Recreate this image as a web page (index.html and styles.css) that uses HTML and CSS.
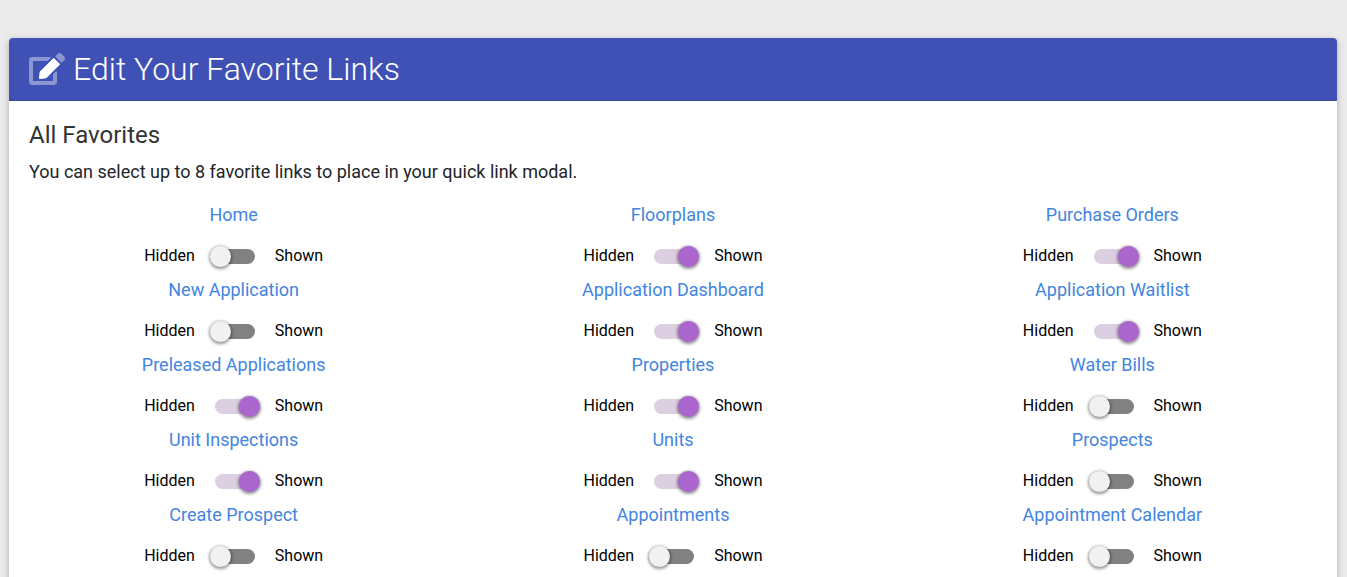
FILE: index.html
```html
<!DOCTYPE html>
<html lang="en">
<head>
    <meta charset="UTF-8">
    <meta name="viewport" content="width=device-width, initial-scale=1.0">
    <title>Edit Your Favorite Links</title>
    <link rel="stylesheet" href="styles.css">
</head>
<body>
    <main class="card">
        <!-- Card title -->
        <div class="card-header">
            <h2>
                <svg class="icon" viewBox="0 0 576 512" aria-hidden="true">
                    <path class="icon-secondary" d="M564.6 60.3l-48.8-48.8c-15.2-15.2-39.9-15.2-55.2 0l-35.4 35.4c-3.8 3.8-3.8 10 0 13.8l90.2 90.2c3.8 3.8 10 3.8 13.8 0l35.4-35.4c15.2-15.3 15.2-40 0-55.2zM384 346.2V448H64V128h229.8c3.2 0 6.2-1.3 8.5-3.5l40-40c7.6-7.6 2.2-20.5-8.5-20.5H48C21.5 64 0 85.5 0 112v352c0 26.5 21.5 48 48 48h352c26.5 0 48-21.5 48-48V306.2c0-10.7-12.9-16-20.5-8.5l-40 40c-2.2 2.3-3.5 5.3-3.5 8.5z"/>
                    <path d="M402.6 83.2l90.2 90.2c3.8 3.8 3.8 10 0 13.8L274.4 405.6l-92.8 10.3c-12.4 1.4-22.9-9.1-21.5-21.5l10.3-92.8L388.8 83.2c3.8-3.8 10-3.8 13.8 0z"/>
                </svg>
                Edit Your Favorite Links
            </h2>
        </div>

        <div class="card-body">
            <h4>All Favorites</h4>
            <p>You can select up to 8 favorite links to place in your quick link modal.</p>

            <!-- One cell per link, three across -->
            <div class="favorites">
                <div class="favorite">
                    <a href="#">Home</a>
                    <label class="switch">Hidden <input type="checkbox"> Shown</label>
                </div>
                <div class="favorite">
                    <a href="#">Floorplans</a>
                    <label class="switch">Hidden <input type="checkbox" checked> Shown</label>
                </div>
                <div class="favorite">
                    <a href="#">Purchase Orders</a>
                    <label class="switch">Hidden <input type="checkbox" checked> Shown</label>
                </div>

                <div class="favorite">
                    <a href="#">New Application</a>
                    <label class="switch">Hidden <input type="checkbox"> Shown</label>
                </div>
                <div class="favorite">
                    <a href="#">Application Dashboard</a>
                    <label class="switch">Hidden <input type="checkbox" checked> Shown</label>
                </div>
                <div class="favorite">
                    <a href="#">Application Waitlist</a>
                    <label class="switch">Hidden <input type="checkbox" checked> Shown</label>
                </div>

                <div class="favorite">
                    <a href="#">Preleased Applications</a>
                    <label class="switch">Hidden <input type="checkbox" checked> Shown</label>
                </div>
                <div class="favorite">
                    <a href="#">Properties</a>
                    <label class="switch">Hidden <input type="checkbox" checked> Shown</label>
                </div>
                <div class="favorite">
                    <a href="#">Water Bills</a>
                    <label class="switch">Hidden <input type="checkbox"> Shown</label>
                </div>

                <div class="favorite">
                    <a href="#">Unit Inspections</a>
                    <label class="switch">Hidden <input type="checkbox" checked> Shown</label>
                </div>
                <div class="favorite">
                    <a href="#">Units</a>
                    <label class="switch">Hidden <input type="checkbox" checked> Shown</label>
                </div>
                <div class="favorite">
                    <a href="#">Prospects</a>
                    <label class="switch">Hidden <input type="checkbox"> Shown</label>
                </div>

                <div class="favorite">
                    <a href="#">Create Prospect</a>
                    <label class="switch">Hidden <input type="checkbox"> Shown</label>
                </div>
                <div class="favorite">
                    <a href="#">Appointments</a>
                    <label class="switch">Hidden <input type="checkbox"> Shown</label>
                </div>
                <div class="favorite">
                    <a href="#">Appointment Calendar</a>
                    <label class="switch">Hidden <input type="checkbox"> Shown</label>
                </div>
            </div>
        </div>
    </main>
</body>
</html>
```

FILE: styles.css
```css
* {
    box-sizing: border-box;
}
body {
    margin: 0;
    padding: 38px 10px 38px 9px;
    background-color: #ebebeb;
    color: #212529;
    font-family: Roboto, sans-serif;
    font-size: 18px;
    line-height: 27px;
}
.card {
    background-color: #fff;
    border-radius: 4px;
    box-shadow: 0 2px 5px rgba(0, 0, 0, 0.16), 0 2px 10px rgba(0, 0, 0, 0.12);
}
.card-header {
    padding: 12px 20px;
    background-color: #3f51b5;
    border-bottom: 1px solid #3b4a94;
    border-radius: 4px 4px 0 0;
    color: #fff;
}
h2 {
    display: flex;
    align-items: center;
    gap: 8px;
    margin: 0;
    font-size: 32px;
    font-weight: 300;
    line-height: 38px;
}
.icon {
    width: 36px;
    height: 32px;
    fill: currentColor;
}
.icon-secondary {
    opacity: 0.4;
}
.card-body {
    padding: 20px;
}
h4 {
    margin: 0 0 8px;
    font-size: 24px;
    font-weight: 400;
    line-height: 29px;
    color: #333;
}
p {
    margin: 0 0 16px;
}
.favorites {
    display: grid;
    grid-template-columns: repeat(3, 1fr);
    row-gap: 8px;
    margin: 0 -15px;
}
.favorite {
    display: flex;
    flex-direction: column;
    align-items: center;
    gap: 16px;
}
a {
    color: #4285e0;
    text-decoration: none;
}
a:hover {
    text-decoration: underline;
}

/* Toggle switch: the checkbox is the track, ::before is the thumb */
.switch {
    display: flex;
    align-items: center;
    gap: 20px;
    color: #000;
    font-size: 16px;
    line-height: 24px;
    cursor: pointer;
}
.switch input {
    appearance: none;
    display: flex;
    align-items: center;
    width: 40px;
    height: 15px;
    margin: 0;
    background-color: #818181;
    border-radius: 15px;
    cursor: pointer;
}
.switch input::before {
    content: "";
    flex: none;
    width: 21px;
    height: 21px;
    margin-left: -5px;
    background-color: #f1f1f1;
    border-radius: 50%;
    box-shadow: 0 1px 3px 1px rgba(0, 0, 0, 0.4);
}
.switch input:checked {
    background-color: #dccfe2;
}
.switch input:checked::before {
    margin-left: 24px;
    background-color: #aa66cc;
}
```
